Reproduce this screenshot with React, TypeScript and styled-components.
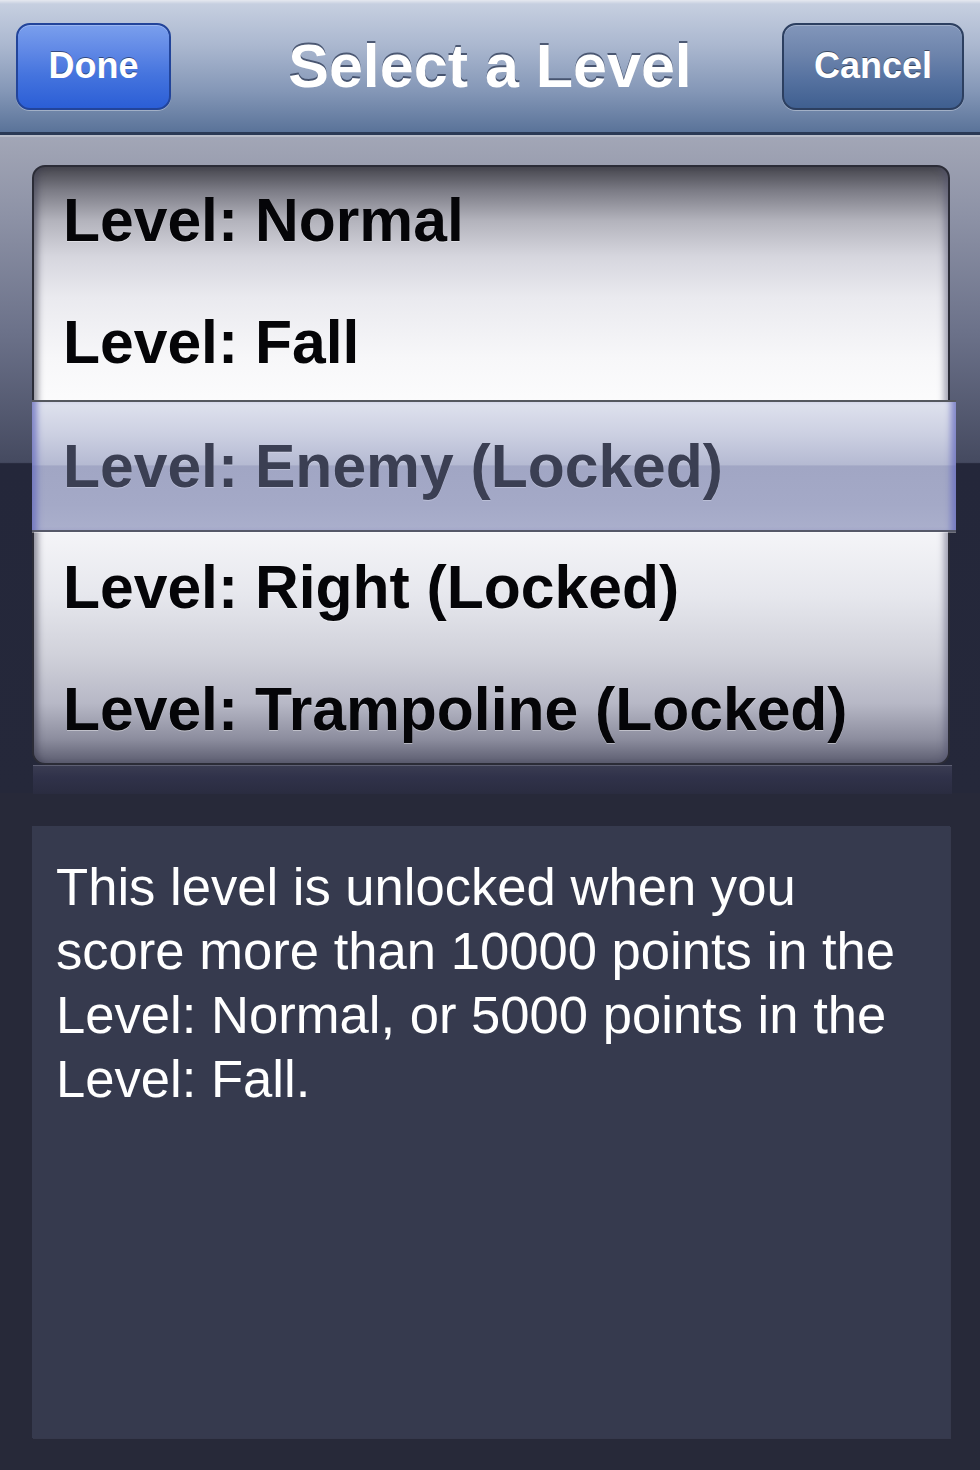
import React from "react";
import styled, { createGlobalStyle } from "styled-components";

const Global = createGlobalStyle`
  html, body { margin: 0; padding: 0; background: #272939; }
  body { font-family: "Liberation Sans", Arial, Helvetica, sans-serif; -webkit-font-smoothing: antialiased; }
  #root { width: 980px; min-height: 1470px; background: #272939; }
`;

const Page = styled.div`
  width: 980px;
  min-height: 1470px;
  display: flex;
  flex-direction: column;
  background: #272939;
`;

const NavBar = styled.header`
  height: 135px;
  box-sizing: border-box;
  padding: 0 16px;
  display: grid;
  grid-template-columns: 1fr auto 1fr;
  align-items: center;
  background: linear-gradient(
    to bottom,
    #e6e9f0 0px,
    #c6cfe0 4px,
    #aab7cf 35%,
    #8396b6 70%,
    #5a7399 100%
  );
  border-bottom: 3px solid #2a3954;
`;

const NavButton = styled.button<{ $variant: "done" | "cancel" }>`
  height: 87px;
  padding: 0;
  width: ${(p) => (p.$variant === "done" ? "155px" : "182px")};
  justify-self: ${(p) => (p.$variant === "done" ? "start" : "end")};
  border-radius: 14px;
  border: 2px solid ${(p) => (p.$variant === "done" ? "#22449a" : "#2c3f60")};
  background: ${(p) =>
    p.$variant === "done"
      ? "linear-gradient(to bottom, #7a9fed 0%, #6189e6 30%, #4574de 60%, #2b5ed6 100%)"
      : "linear-gradient(to bottom, #8296ba 0%, #6d84ac 35%, #5672a0 65%, #3f5f90 100%)"};
  box-shadow: 0 1px 0 rgba(255, 255, 255, 0.35),
    inset 0 1px 0 rgba(255, 255, 255, 0.25);
  color: #ffffff;
  font-family: "Liberation Sans", Arial, sans-serif;
  font-weight: 700;
  font-size: 36px;
  text-shadow: 0 -1px 0 rgba(0, 0, 0, 0.45);
  display: flex;
  align-items: center;
  justify-content: center;
`;

const Title = styled.h1`
  margin: 0;
  font-family: "Liberation Sans", Arial, sans-serif;
  font-weight: 700;
  font-size: 61px;
  color: #ffffff;
  text-shadow: 0 -2px 0 rgba(45, 58, 84, 0.75);
  white-space: nowrap;
`;

const Well = styled.section`
  height: 658px;
  box-sizing: border-box;
  padding: 28px 30px 0 32px;
  border-top: 2px solid #b9bdc9;
  background: linear-gradient(
    to bottom,
    #a2a6b6 0%,
    #8d92a6 12%,
    #6b7189 30%,
    #454a60 49.6%,
    #24273a 49.8%,
    #25283a 100%
  );
`;

const Frame = styled.div`
  display: flex;
  flex-direction: column;
`;

const Wheel = styled.div`
  height: 600px;
  box-sizing: border-box;
  border: 2px solid #2b2c37;
  border-radius: 13px;
  background: linear-gradient(
    to bottom,
    #46464e 0%,
    #7c7c86 4%,
    #b3b3bc 9%,
    #d6d6de 15%,
    #eaeaef 22%,
    #f7f7f9 32%,
    #ffffff 45%,
    #f6f6f9 60%,
    #e6e7ed 72%,
    #d0d1da 82%,
    #b7b8c6 90%,
    #8c8d9e 96%,
    #5c5d70 100%
  );
  box-shadow: inset 8px 0 6px -4px rgba(60, 60, 80, 0.55),
    inset -8px 0 6px -4px rgba(80, 80, 110, 0.5);
  display: flex;
  flex-direction: column;
`;

const RowList = styled.div`
  margin-top: -8px;
  display: flex;
  flex-direction: column;
`;

const Row = styled.div<{ $selected?: boolean }>`
  height: ${(p) => (p.$selected ? "132px" : "122px")};
  display: flex;
  align-items: center;
  box-sizing: border-box;
  padding-left: ${(p) => (p.$selected ? "31px" : "29px")};
  margin: ${(p) => (p.$selected ? "-3px -8px -6px -2px" : "0")};
  font-family: "Liberation Sans", Arial, sans-serif;
  font-weight: 700;
  font-size: 60.6px;
  white-space: nowrap;
  color: ${(p) => (p.$selected ? "#3b3f53" : "#050508")};
  text-shadow: ${(p) =>
    p.$selected ? "0 1px 0 rgba(230, 232, 245, 0.35)" : "0 1px 0 rgba(255, 255, 255, 0.4)"};
  position: relative;
  ${(p) =>
    p.$selected &&
    `
    border-top: 2px solid #55585f;
    border-bottom: 2px solid #555868;
    background: linear-gradient(
      to bottom,
      #dfe2ee 0%,
      #ccd0e2 25%,
      #b5bad2 49%,
      #a1a6c4 50%,
      #a4a9c7 80%,
      #aaafcc 100%
    );
    box-shadow: inset 10px 0 6px -5px rgba(100, 106, 190, 0.75),
      inset -10px 0 6px -5px rgba(100, 106, 190, 0.75),
      0 1px 0 rgba(255, 255, 255, 0.35);
  `}
`;

const Lip = styled.div`
  height: 28px;
  margin: 0 -2px 0 1px;
  border-top: 1px solid #5d5f73;
  background: linear-gradient(to bottom, #3a3c52 0%, #30324a 40%, #2a2c40 100%);
`;

const InfoBox = styled.section`
  margin: 33px 30px 0 32px;
  height: 612px;
  box-sizing: border-box;
  padding: 29px 20px 0 24px;
  background: #363a4e;
  box-shadow: 1px 1px 0 rgba(70, 74, 96, 0.5);
  color: #ffffff;
  font-family: "Liberation Sans", Arial, sans-serif;
  font-size: 52.6px;
  line-height: 64px;
  white-space: nowrap;
`;

const levels = [
  { name: "Level: Normal" },
  { name: "Level: Fall" },
  { name: "Level: Enemy (Locked)", selected: true },
  { name: "Level: Right (Locked)" },
  { name: "Level: Trampoline (Locked)" },
];

export default function App() {
  return (
    <>
      <Global />
      <Page>
        <NavBar>
          <NavButton $variant="done">Done</NavButton>
          <Title>Select a Level</Title>
          <NavButton $variant="cancel">Cancel</NavButton>
        </NavBar>
        <Well>
          <Frame>
            <Wheel>
              <RowList>
                {levels.map((l) => (
                  <Row key={l.name} $selected={l.selected}>
                    {l.name}
                  </Row>
                ))}
              </RowList>
            </Wheel>
            <Lip />
          </Frame>
        </Well>
        <InfoBox>
          This level is unlocked when you
          <br />
          score more than 10000 points in the
          <br />
          Level: Normal, or 5000 points in the
          <br />
          Level: Fall.
        </InfoBox>
      </Page>
    </>
  );
}
